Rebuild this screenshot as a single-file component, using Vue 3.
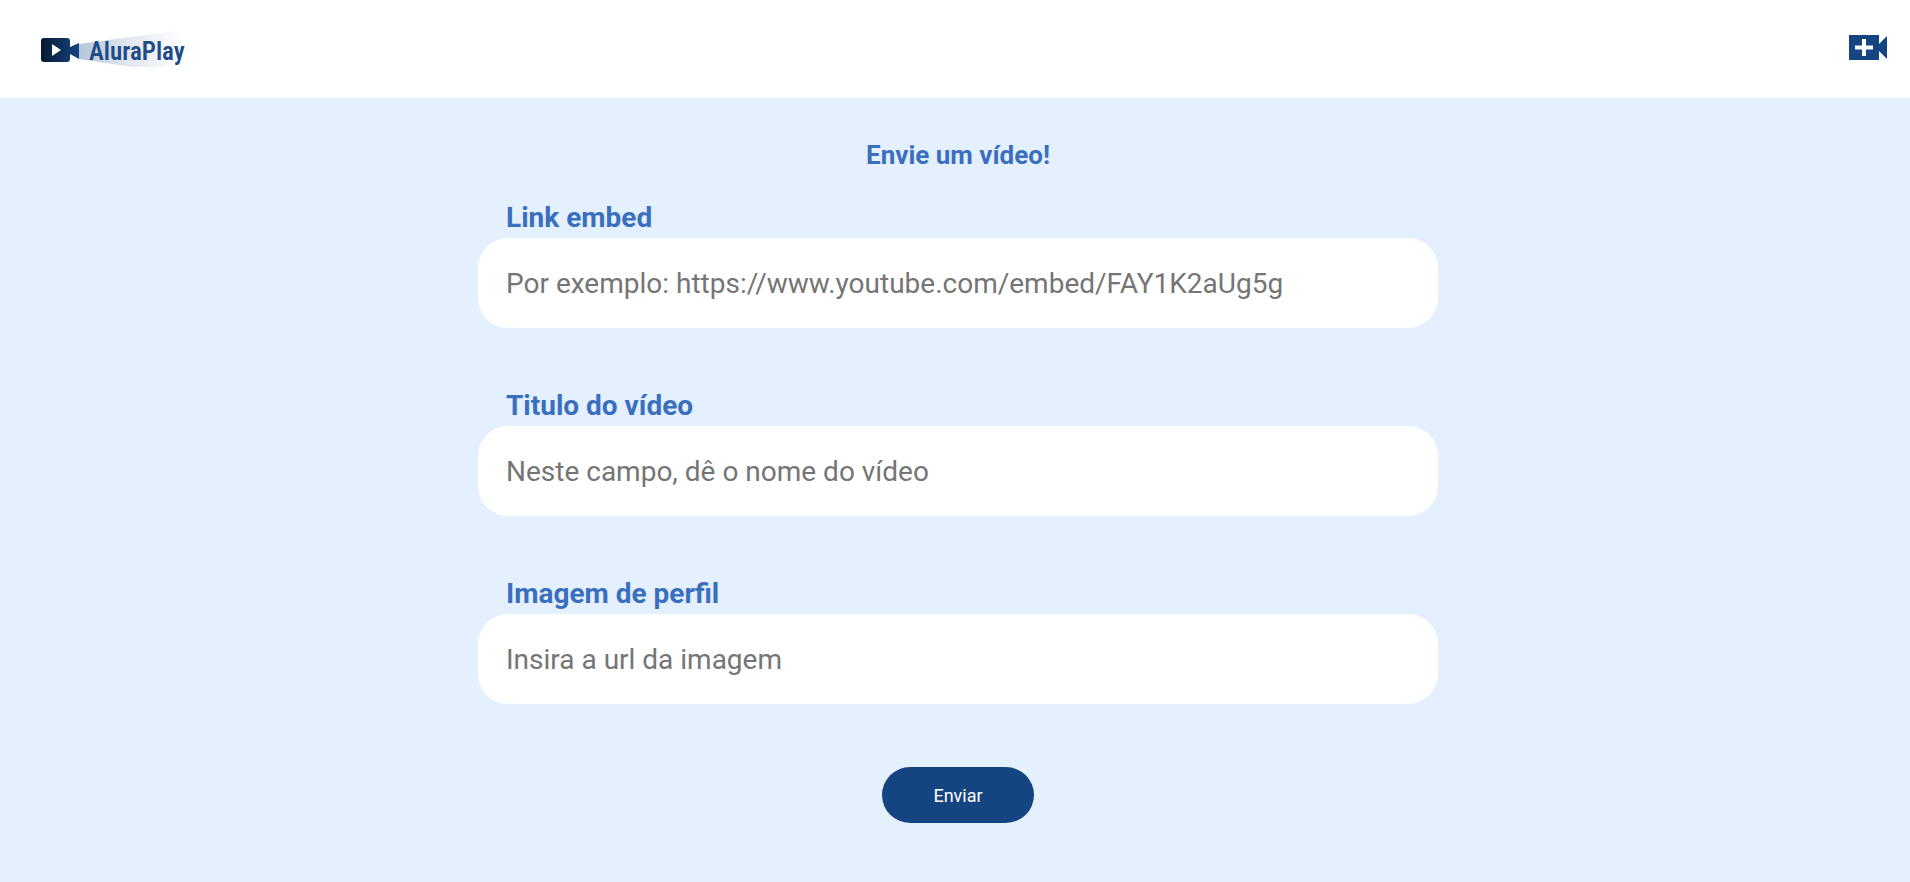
<script setup>
import { reactive } from 'vue'

const fields = [
  { id: 'url', label: 'Link embed', type: 'url', placeholder: 'Por exemplo: https://www.youtube.com/embed/FAY1K2aUg5g' },
  { id: 'titulo', label: 'Titulo do vídeo', type: 'text', placeholder: 'Neste campo, dê o nome do vídeo' },
  { id: 'imagem', label: 'Imagem de perfil', type: 'url', placeholder: 'Insira a url da imagem' },
]
const form = reactive({ url: '', titulo: '', imagem: '' })
</script>

<template>
  <div class="page">
    <header class="header">
      <a class="logo" href="#" aria-label="AluraPlay">
        <svg class="logo-art" viewBox="0 0 144 40" width="144" height="40" aria-hidden="true">
          <defs>
            <linearGradient id="camera" x1="0" x2="1" y1="0" y2="0">
              <stop offset="0" stop-color="#051933" />
              <stop offset="1" stop-color="#154580" />
            </linearGradient>
            <linearGradient id="beam" x1="0" x2="1" y1="0" y2="0">
              <stop offset="0" stop-color="#b5c5da" />
              <stop offset="0.45" stop-color="#e0e6ef" />
              <stop offset="1" stop-color="#ffffff" />
            </linearGradient>
          </defs>
          <path d="M38 15 L142 1 V38 H92 L38 30 Z" fill="url(#beam)" />
          <path d="M3 9 H26 Q29 9 29 12 V18 L38 14 V30 L29 25 V30 Q29 33 26 33 H3 Q0 33 0 30 V12 Q0 9 3 9 Z" fill="url(#camera)" />
          <path d="M11 15 L20 21 L11 27 Z" fill="#fff" />
        </svg>
        <span class="logo-text">AluraPlay</span>
      </a>
      <a class="add" href="#" aria-label="Enviar vídeo">
        <svg viewBox="0 0 38 25" width="38" height="25" aria-hidden="true">
          <path d="M0 0 H30 V9 L38 1 V24 L30 16 V25 H0 Z" fill="#154580" />
          <path d="M13 4 H17 V10.500 H24 V14.500 H17 V21 H13 V14.500 H6 V10.500 H13 Z" fill="#fff" />
        </svg>
      </a>
    </header>

    <main class="main">
      <form class="form" @submit.prevent>
        <h2 class="title">Envie um vídeo!</h2>
        <div v-for="f in fields" :key="f.id" class="field">
          <label class="label" :for="f.id">{{ f.label }}</label>
          <input :id="f.id" v-model="form[f.id]" class="input" :type="f.type" :placeholder="f.placeholder" />
        </div>
        <button class="submit" type="submit">Enviar</button>
      </form>
    </main>
  </div>
</template>

<style>
body {
  margin: 0;
  background: #e5f0ff;
}
</style>

<style scoped>
.page {
  min-height: 100vh;
  box-sizing: border-box;
  background: #e5f0ff;
  font-family: Roboto, "Liberation Sans", sans-serif;
}
.header {
  display: flex;
  align-items: center;
  justify-content: space-between;
  height: 98px;
  padding: 0 23px 0 41px;
  box-sizing: border-box;
  background: #fff;
}
.logo {
  position: relative;
  display: flex;
  text-decoration: none;
}
.logo-art {
  display: block;
}
.logo-text {
  position: absolute;
  left: 48px;
  top: 7px;
  color: #1d4c88;
  font: 600 25px/32px "Roboto Condensed", "Liberation Sans Narrow", "DejaVu Sans Condensed", sans-serif;
}
.add {
  display: flex;
  margin-bottom: 4px;
}
.add svg {
  display: block;
}
.main {
  display: flex;
  justify-content: center;
  padding: 41px 24px 40px 30px;
}
.form {
  display: flex;
  flex-direction: column;
  align-items: center;
  width: 100%;
  max-width: 960px;
}
.title {
  margin: 0 0 29px;
  color: #3a6fbf;
  font-size: 26px;
  line-height: 33px;
  font-weight: 700;
}
.field {
  display: flex;
  flex-direction: column;
  width: 100%;
  margin-bottom: 61px;
}
.label {
  margin: 0 28px 4px;
  color: #3a6fbf;
  font-size: 28px;
  line-height: 33px;
  font-weight: 700;
}
.input {
  width: 100%;
  height: 90px;
  padding: 0 28px;
  box-sizing: border-box;
  border: 0;
  border-radius: 30px;
  background: #fff;
  color: #333;
  font-family: inherit;
  font-size: 28px;
}
.input::placeholder {
  color: #757575;
}
.submit {
  width: 152px;
  height: 56px;
  margin-top: 2px;
  border: 0;
  border-radius: 30px;
  background: #154580;
  color: #fff;
  font-family: inherit;
  font-size: 18px;
  cursor: pointer;
}
</style>
